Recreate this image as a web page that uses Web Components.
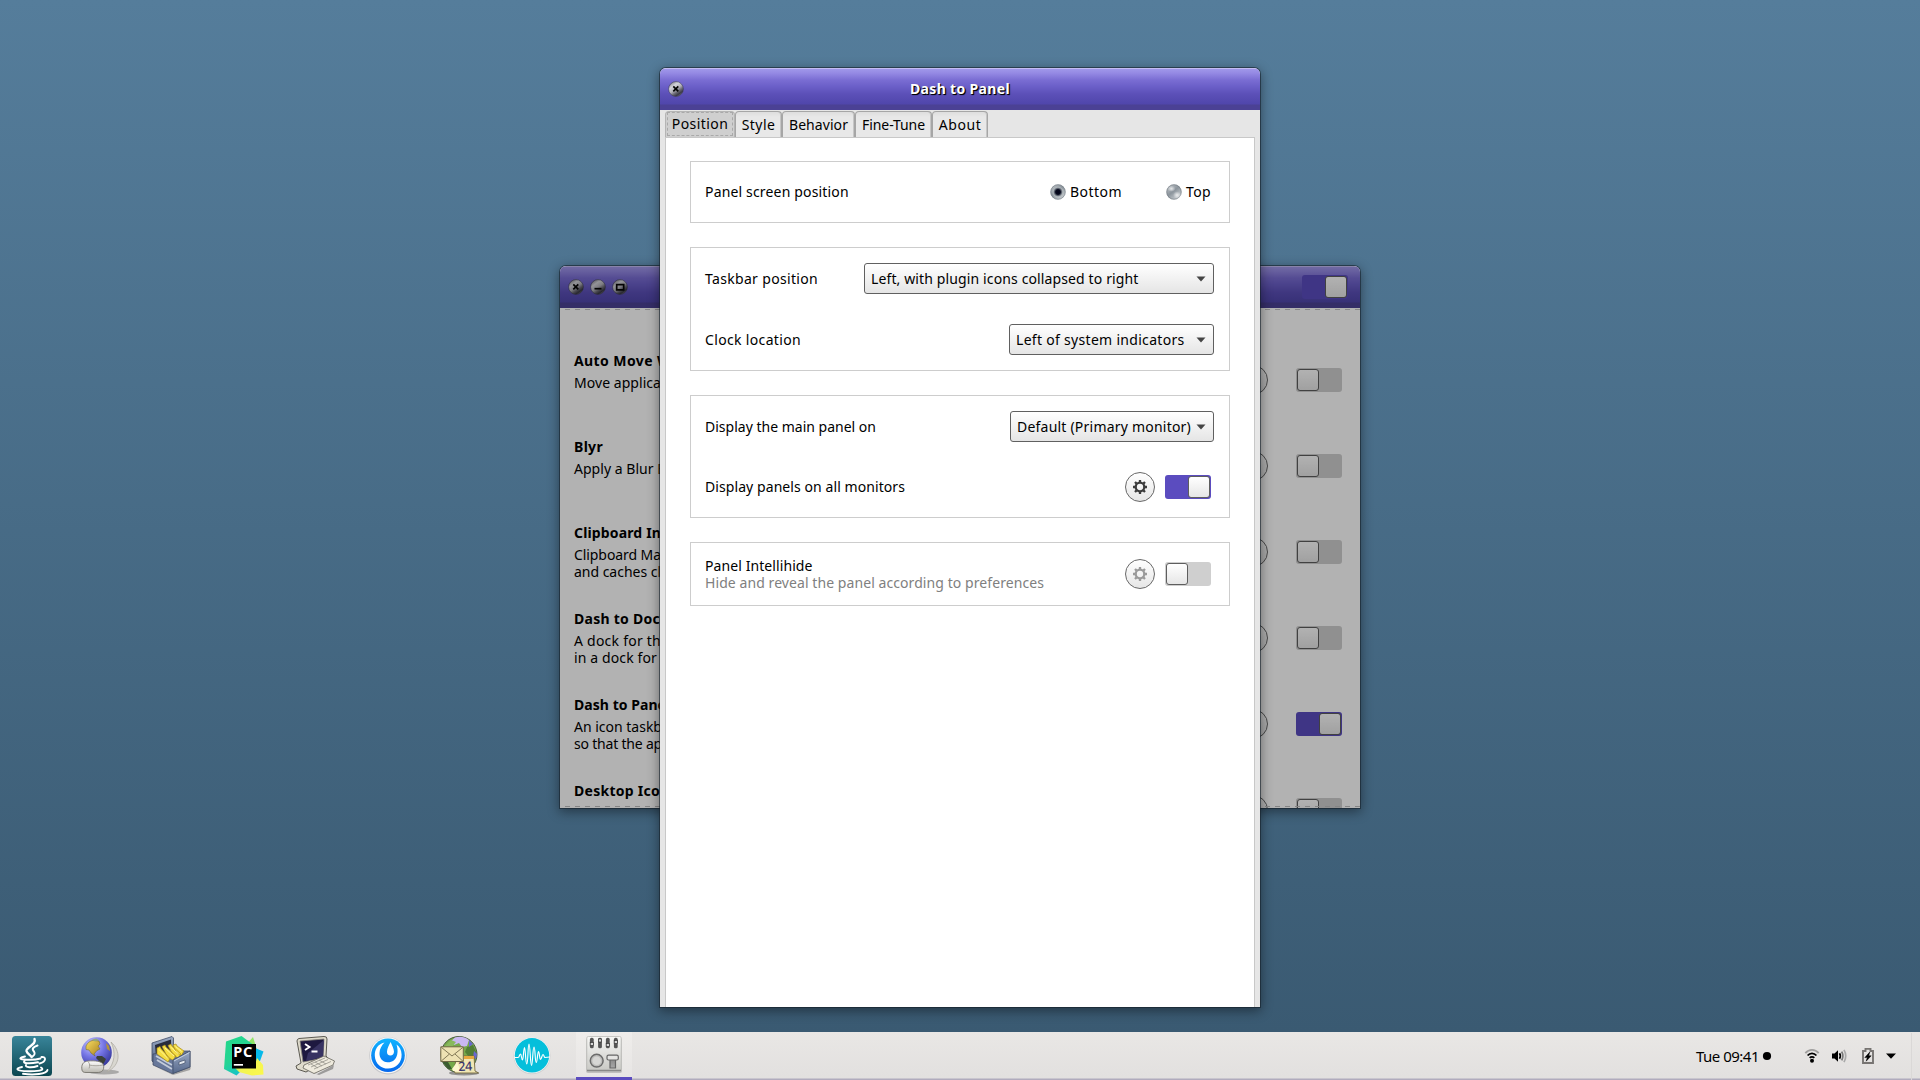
<!DOCTYPE html>
<html lang="en">
<head>
<meta charset="utf-8">
<title>Dash to Panel</title>
<style>
html,body{margin:0;height:100%;overflow:hidden}
body{font:14px/18px "Noto Sans","Open Sans",sans-serif;color:#000}
</style>
</head>
<body>
<desk-top></desk-top>
<script>
const define=(name,html,setup)=>{
  const t=document.createElement('template');t.innerHTML=html;
  customElements.define(name,class extends HTMLElement{
    connectedCallback(){
      if(this.shadowRoot)return;
      this.attachShadow({mode:'open'}).append(t.content.cloneNode(true));
      if(setup)setup(this,this.shadowRoot);
    }
  });
};

/* Label whose tracking is adjusted so that it takes the width "w" */
define('ui-text',`<style>:host{display:block;white-space:nowrap;flex:none}span{display:inline-block}</style><span><slot></slot></span>`,(el,r)=>{
  const w=+el.getAttribute('w');if(!w)return;
  const s=r.querySelector('span');
  const n=el.textContent.length;
  el.style.width=w+'px';
  s.style.letterSpacing=((w-s.getBoundingClientRect().width)/n).toFixed(3)+'px';
});

define('ui-switch',`<style>
:host{display:block;flex:none;width:46px;height:24px;border-radius:3px;background:#cfcfcf;box-sizing:border-box;padding:1px}
i{display:block;box-sizing:border-box;width:22px;height:22px;border:1px solid #5e5e5e;border-radius:3px;background:linear-gradient(#fff,#e6e6e6)}
:host([on]){background:#5b4cbf}
:host([on]) i{margin-left:22px}
</style><i></i>`);

define('gear-button',`<style>
:host{display:flex;flex:none;box-sizing:border-box;width:30px;height:30px;border:1px solid #686868;border-radius:50%;background:linear-gradient(#fff,#e6e6e6);align-items:center;justify-content:center;color:#3c3c3c}
:host([off]){color:#9a9a9a}
svg{display:block}
</style><svg width="16" height="16" viewBox="-8 -8 16 16"><g fill="none" stroke="currentColor"><circle r="4.3" stroke-width="2.3"/><g stroke-width="2.3"><path d="M0-4.700V-7M0 4.700V7M4.700 0H7M-4.700 0H-7M3.400-3.400 5-5M-3.400-3.400-5-5M3.400 3.400 5 5M-3.400 3.400-5 5"/></g></g></svg>`);

define('drop-down',`<style>
:host{display:flex;flex:none;box-sizing:border-box;height:31px;border:1px solid #606060;border-radius:3px;background:linear-gradient(#fff,#e5e5e5);align-items:center;justify-content:space-between;padding:0 7px 0 6px}
svg{display:block}
</style><slot></slot><svg width="10" height="6" viewBox="0 0 10 6"><path d="M.5.5h9L5 5.6z" fill="#444"/></svg>`);

define('radio-dot',`<style>:host{display:block;flex:none;margin-right:4px}svg{display:block}
.p{display:none}:host([on]) .p{display:block}:host([on]) .h{display:none}</style>
<svg width="16" height="16" viewBox="0 0 16 16"><defs>
<linearGradient id="a" x1="0" y1="0" x2=".8" y2="1"><stop offset="0" stop-color="#c9cdd1"/><stop offset=".5" stop-color="#8b949c"/><stop offset="1" stop-color="#d5d9dc"/></linearGradient>
<radialGradient id="b"><stop offset="0" stop-color="#000016"/><stop offset=".5" stop-color="#06091c"/><stop offset="1" stop-color="#1c2338" stop-opacity="0"/></radialGradient>
<radialGradient id="c"><stop offset="0" stop-color="#fff" stop-opacity=".75"/><stop offset="1" stop-color="#fff" stop-opacity="0"/></radialGradient></defs>
<circle cx="8" cy="8" r="7.7" fill="url(#a)"/><circle cx="8" cy="8" r="7.2" fill="none" stroke="#777f86" stroke-opacity=".6"/>
<g class="h"><ellipse cx="5.500" cy="4.800" rx="4" ry="3" fill="url(#c)"/><ellipse cx="11" cy="11" rx="4" ry="3.600" fill="url(#c)"/></g>
<g class="p"><circle cx="8" cy="8" r="5.600" fill="#b4babe" opacity=".7"/><circle cx="8" cy="8" r="4.800" fill="url(#b)"/></g></svg>`);

define('win-button',`<style>:host{display:block;flex:none}svg{display:block}path{display:none;fill:none;stroke:#050505;stroke-width:1.7}
:host([kind=close]) .x,:host([kind=min]) .m,:host([kind=max]) .b{display:block}</style>
<svg width="16" height="16" viewBox="0 0 16 16"><defs>
<linearGradient id="g" x1=".15" y1="0" x2=".85" y2="1"><stop offset="0" stop-color="#77767f"/><stop offset=".28" stop-color="#d4d4da"/><stop offset=".5" stop-color="#b4b3bb"/><stop offset=".68" stop-color="#66656f"/><stop offset=".82" stop-color="#3a3944"/><stop offset="1" stop-color="#a3a2ac"/></linearGradient></defs>
<circle cx="8" cy="8" r="7.400" fill="url(#g)" stroke="#3c3a55" stroke-opacity=".7" stroke-width=".8"/>
<path class="x" d="M5.300 5.300l5 5M10.300 5.300l-5 5"/><path class="m" d="M4.500 9.700h7"/><path class="b" d="M4.700 5.600h7v5.200h-7z"/></svg>`);

define('app-window',`<style>
:host{display:flex;flex-direction:column;position:absolute;border-radius:6px 6px 0 0;box-shadow:0 0 0 1px rgba(22,34,44,.6),0 3px 12px 1px rgba(0,0,0,.42);background:#e6e6e6}
header{flex:none;display:grid;grid-template-columns:1fr auto 1fr;align-items:center;height:42px;box-sizing:border-box;padding:0 12px;border-radius:6px 6px 0 0;
background:linear-gradient(#c3bcf2 0 1px,#a097ea 1px,#958ae4 5px,#7a6dd3 12px,#6c60c9 18px,#5c50b8 26px,#5046ab 36px,#4b4194 37px,#4b4194);color:#fff;font-weight:700;text-shadow:1px 1px 1px #000,1px 1px 0 rgba(0,0,0,.7)}
.l{display:flex;gap:6px;margin-left:-4px;grid-column:1}.r{display:flex;justify-content:flex-end;grid-column:3;grid-row:1}
main{flex:1;min-height:0;display:flex;flex-direction:column;overflow:hidden}
:host([dim])::after{content:"";position:absolute;inset:0;border-radius:6px 6px 0 0;background:rgba(0,0,0,.3)}
</style><header><div class="l"><slot name="buttons"></slot></div><slot name="title"></slot><div class="r"><slot name="end"></slot></div></header><main><slot></slot></main>`);

define('ui-tab',`<style>
:host{display:flex;flex:none;box-sizing:border-box;height:26px;border:1px solid #a6a6a6;border-bottom:0;border-radius:4px 4px 0 0;justify-content:center;align-items:center;padding-top:1px;background:linear-gradient(#dedede,#e8e8e8 5px);box-shadow:inset -1px 0 #c6c6c6}
:host([sel]){background:#cfcfcf;padding:0;border-color:#b5b5b5;box-shadow:none}
div{display:flex;align-items:center;justify-content:center}
:host([sel]) div{flex:1;height:24px;margin:0 1px;border:1px dashed #a9a9a9;box-sizing:border-box;align-self:flex-start}
</style><div><slot></slot></div>`);

define('pref-card',`<style>:host{display:block;border:1px solid #cdcdcd;flex:none}</style><slot></slot>`);
define('pref-row',`<style>:host{display:flex;box-sizing:border-box;align-items:center;height:61px;padding:0 15px 0 14px}
.s{flex:1}.e{display:flex;align-items:center}</style><slot></slot><div class="s"></div><div class="e"><slot name="end"></slot></div>`);

define('ext-row',`<style>
:host{display:flex;flex:none;height:86px;box-sizing:border-box;padding:0 18px 0 14px}
.t{flex:1;padding-top:15px;min-width:0}
.n{font-weight:700}
.d{margin-top:4.4px;line-height:17px}
.e{display:flex;align-items:center;gap:28px}
</style><div class="t"><div class="n"><slot name="name"></slot></div><div class="d"><slot></slot></div></div><div class="e"><gear-button></gear-button><slot name="sw"></slot></div>`);

define('prefs-dialog',`<style>
:host{display:contents}
app-window{left:660px;top:68px;width:600px;height:939px}
nav{display:flex;height:26px;padding:1px 5px 0}
.page{flex:1;margin:0 5px;border:1px solid #c8c8c8;border-bottom:0;background:#fff;padding:23px 24px 0;display:flex;flex-direction:column;gap:24px}
.short{height:60px}.low{height:62px}
.radios{display:flex;align-items:center;margin-right:3px}
.sub{color:#808080}
.two{line-height:17px}
.sw{display:flex;align-items:center;gap:10px;margin-right:3px}
</style>
<app-window>
<win-button slot="buttons" kind="close"></win-button><ui-text slot="title" w="100">Dash to Panel</ui-text>
<nav><ui-tab sel style="width:70px"><ui-text w="56.5">Position</ui-text></ui-tab><ui-tab style="width:47px"><ui-text w="33.5">Style</ui-text></ui-tab><ui-tab style="width:73px"><ui-text w="59">Behavior</ui-text></ui-tab><ui-tab style="width:77px"><ui-text w="63">Fine-Tune</ui-text></ui-tab><ui-tab style="width:56px"><ui-text w="42.5">About</ui-text></ui-tab></nav>
<div class="page">
<pref-card><pref-row class="short"><ui-text w="143.8">Panel screen position</ui-text><div slot="end" class="radios"><radio-dot on></radio-dot><ui-text w="52">Bottom</ui-text><radio-dot style="margin-left:44px"></radio-dot><ui-text w="25">Top</ui-text></div></pref-row></pref-card>
<pref-card><pref-row><ui-text w="113">Taskbar position</ui-text><drop-down slot="end" style="width:350px"><ui-text w="267.500">Left, with plugin icons collapsed to right</ui-text></drop-down></pref-row>
<pref-row><ui-text w="96">Clock location</ui-text><drop-down slot="end" style="width:205px"><ui-text w="168.500">Left of system indicators</ui-text></drop-down></pref-row></pref-card>
<pref-card><pref-row><ui-text w="171">Display the main panel on</ui-text><drop-down slot="end" style="width:204px"><ui-text w="174">Default (Primary monitor)</ui-text></drop-down></pref-row>
<pref-row class="short"><ui-text w="200">Display panels on all monitors</ui-text><div slot="end" class="sw"><gear-button></gear-button><ui-switch on></ui-switch></div></pref-row></pref-card>
<pref-card><pref-row class="low"><div class="two"><ui-text w="107.500">Panel Intellihide</ui-text><ui-text class="sub" w="339">Hide and reveal the panel according to preferences</ui-text></div><div slot="end" class="sw"><gear-button off></gear-button><ui-switch></ui-switch></div></pref-row></pref-card>
</div>
</app-window>`);

define('extensions-window',`<style>
:host{display:contents}
app-window{left:560px;top:266px;width:800px;height:542px}
.list{flex:1;min-height:0;background:#fff;overflow:hidden;display:flex;flex-direction:column}
.dash{flex:none;height:1px;margin-left:5px;background:repeating-linear-gradient(90deg,#c4c4c4 0 5px,transparent 5px 10px)}
.rows{flex:1;min-height:0;overflow:hidden;display:flex;flex-direction:column;padding-top:27px;margin-bottom:-2px}
.top{margin-top:1px}.bot{margin-bottom:1px;background:repeating-linear-gradient(90deg,#bdbdbd 0 5px,transparent 5px 10px)}
</style>
<app-window dim>
<win-button slot="buttons" kind="close"></win-button><win-button slot="buttons" kind="min"></win-button><win-button slot="buttons" kind="max"></win-button>
<ui-switch slot="end" on></ui-switch>
<div class="list"><div class="dash top"></div><div class="rows">
<ext-row><ui-text slot="name" w="97">Auto Move W</ui-text><ui-text w="87">Move applica</ui-text><ui-switch slot="sw"></ui-switch></ext-row>
<ext-row><ui-text slot="name" w="29">Blyr</ui-text><ui-text w="91">Apply a Blur E</ui-text><ui-switch slot="sw"></ui-switch></ext-row>
<ext-row><ui-text slot="name" w="87">Clipboard In</ui-text><ui-text w="87">Clipboard Ma</ui-text><ui-text w="87">and caches cl</ui-text><ui-switch slot="sw"></ui-switch></ext-row>
<ext-row><ui-text slot="name" w="86">Dash to Doc</ui-text><ui-text w="87">A dock for th</ui-text><ui-text w="83">in a dock for</ui-text><ui-switch slot="sw"></ui-switch></ext-row>
<ext-row><ui-text slot="name" w="92">Dash to Pane</ui-text><ui-text w="88">An icon taskb</ui-text><ui-text w="88">so that the ap</ui-text><ui-switch slot="sw" on></ui-switch></ext-row>
<ext-row><ui-text slot="name" w="86">Desktop Ico</ui-text><ui-switch slot="sw"></ui-switch></ext-row>
</div><div class="dash bot"></div></div>
</app-window>`);

define('task-item',`<style>:host{display:flex;flex:none;box-sizing:border-box;width:56px;height:100%;justify-content:center;padding-top:4px}
:host([active]){background:linear-gradient(#efedeb,#e7e5e4);border-bottom:3px solid #5b4cbf}</style><slot></slot>`);

define('task-bar',`<style>
:host{display:flex;flex:none;height:48px;box-sizing:border-box;background:linear-gradient(#e9e7e5,#e2e0df 46px,#b0abbd 47px)}
.apps{display:flex;gap:16px;padding-left:4px;flex:1}
.first{margin-right:-4px}
svg{display:block;overflow:visible}
.tray{display:flex;align-items:center;height:48px}
.clock{font-size:15px;line-height:20px}
.edge{width:8px;height:47px;border-left:1px solid #dad8d7;margin-left:15px}
</style>
<div class="apps">
<task-item class="first"><svg width="40" height="40"><defs><linearGradient id="j" x1="0" y1="0" x2="0" y2="1"><stop offset="0" stop-color="#39859a"/><stop offset="1" stop-color="#0b4650"/></linearGradient></defs><rect width="40" height="40" rx="3.5" fill="url(#j)"/>
<g fill="none" stroke="#fff" stroke-width="1.9" stroke-linecap="round"><path d="M22.5 3C25 9 14 10.500 14.500 15C15 17.500 18 18.500 19.500 21" stroke-width="2.400"/><path d="M25.500 9.500C21 11 19.500 13 22 15.500C23.500 18 22.500 19 20.500 20.500" stroke-width="2"/>
<path d="M13 20.500C7.500 21.500 6.500 23.300 12 23.500C19 24 25 23.500 28.500 22.500M29.500 21C34.500 20.500 34.500 25.500 27.500 27.500M12.500 25C10 27.300 17 28.200 26 26.200M14 29C12.500 31.500 20 32 25.500 30"/>
<path d="M10 31C2.500 32.500 4 35 16 35.200C30 35.500 32.500 33.500 29 31.500M11 37.800C22 39.500 34.500 38 35.500 34"/></g></svg></task-item>

<task-item><svg width="40" height="40"><defs><radialGradient id="e" cx=".35" cy=".25" r=".8"><stop offset="0" stop-color="#c9c9ff"/><stop offset=".5" stop-color="#7474e4"/><stop offset="1" stop-color="#34369a"/></radialGradient><linearGradient id="gd" x1="0" y1="0" x2="1" y2="1"><stop offset="0" stop-color="#f7dc61"/><stop offset="1" stop-color="#a8801f"/></linearGradient><linearGradient id="ms" x1="0" y1="0" x2="0" y2="1"><stop offset="0" stop-color="#fff"/><stop offset="1" stop-color="#b8b6ae"/></linearGradient></defs>
<ellipse cx="24" cy="36" rx="15" ry="2.500" fill="#555" opacity=".4"/><path d="M31 6C41 15 41 29 27 36C35 27 36 16 31 6z" fill="#d9d7d0" stroke="#aaa89f" stroke-width=".7"/>
<circle cx="16.500" cy="16.500" r="15.300" fill="url(#e)"/>
<path d="M6 10C8 6 11 4 15 4.500L19 5 20 8 18 10 20 13 17 14.500 14 18 15 20 11 17 9 14 6 13.500z" fill="url(#gd)" stroke="#77702a" stroke-width=".6"/><path d="M12 3.500l4-1 3 1.500-4 1.500z" fill="#94a978"/><path d="M17 20l5 0 4 3-2 4-4 4-1-6-3-3z" fill="#3b4139"/><path d="M26 7l3 3 1 5-3-2z" fill="#b29438"/>
<path d="M2 34C1 29 3 25.500 8 25C15 24.500 22 25 23.500 29C24.500 34 22 36.700 17 36.500H6C3 36.500 2.300 35.500 2 34z" fill="url(#ms)" stroke="#77756e" stroke-width=".9"/><path d="M8 25.500c2 2 2 5 1 7M9 29c5 1 9 1 14 0" fill="none" stroke="#9a978f" stroke-width=".8"/></svg></task-item>

<task-item><svg width="40" height="40"><defs><linearGradient id="cb" x1="0" y1="0" x2="0" y2="1"><stop offset="0" stop-color="#9aa9c3"/><stop offset="1" stop-color="#56688b"/></linearGradient></defs>
<path d="M4 31L19 37.500 39 31 38 34 21 39z" fill="#444" opacity=".4"/>
<path d="M0 7L20 .5 21.500 2V18L2 27 0 25z" fill="url(#cb)" stroke="#3f4b66" stroke-width=".8"/><path d="M3 9L19 3.500V14L4 20z" fill="#272b3a"/>
<path d="M1 18L22 15 38 15V31L20 37.500 1 29z" fill="#67779a" stroke="#3b465f" stroke-width=".7"/><path d="M4 20L20 29M5 24L20 33" stroke="#c3cbd9" stroke-width="2"/>
<path d="M5 12l3-1.500 1 2 9 10-2 3.500L5 18zM10 10.500l3-1.500 1 2 10 9-3 4-5-2zM16 9.500l3-1.500 1 2 9 8-3 4-5-3zM21 9l3-1 1 2 7 5-3 5-5-4z" fill="#f5dd42" stroke="#a98b1c" stroke-width=".7"/><path d="M7 13.500l9 9M13 12l9 8M18.500 11l8 7M23.500 10.500l6 5" stroke="#fff69a" stroke-width="1"/>
<path d="M21 24L38 15V31L21 37.500z" fill="url(#cb)" stroke="#46536e" stroke-width=".9"/><path d="M22 25L37.500 16.500" stroke="#c5d0e2"/><path d="M27 26l6-2v3l-6 2z" fill="#e4e8ee" stroke="#44506a" stroke-width=".7"/></svg></task-item>

<task-item><svg width="40" height="40"><defs><linearGradient id="pc" x1="0" y1="0" x2=".6" y2="1"><stop offset="0" stop-color="#21d789"/><stop offset=".55" stop-color="#25d493"/><stop offset="1" stop-color="#12bfd5"/></linearGradient><linearGradient id="py" x1="1" y1="1" x2="0" y2=".3"><stop offset="0" stop-color="#fcf84a"/><stop offset=".7" stop-color="#f1f451"/><stop offset="1" stop-color="#5fdf77"/></linearGradient></defs>
<path d="M22 9L29 1 33 14 23 18z" fill="#91e566"/><path d="M31 12L39.500 15.500 36 25 31 27z" fill="#07b9e9"/><path d="M2 5.500L17.500 0 31 10 24 28 12.500 39.500 0 33z" fill="url(#pc)"/><path d="M33 22L39 29 39.500 38.500 28 39.500 15 36 11 32 31 29z" fill="url(#py)"/>
<rect x="8" y="8" width="24" height="24.500"/><rect x="9.800" y="28" width="9.200" height="1.700" fill="#fff"/><text x="9.300" y="21.300" font-family="Noto Sans,sans-serif" font-weight="700" font-size="14.500" fill="#fff" textLength="19">PC</text></svg></task-item>

<task-item><svg width="40" height="40"><path d="M6 33l15 5 17-9-1 4-14 6z" fill="#333" opacity=".4"/><path d="M1 5Q1 3 3 2.500L28 .5Q31 .3 31 3L30 20 33 23 10 36 1 33 0 30 5 27z" fill="#dedacb" stroke="#4d4b43" stroke-width=".9"/>
<path d="M4 5L28 3 27 22 7 26z" fill="#1e1940" stroke="#88857b" stroke-width=".8"/><path d="M12 17L28 4 27 21 10 25z" fill="#383362"/><path d="M9 8l4.500 3L9 14M15.500 15.500h6" fill="none" stroke="#fff" stroke-width="1.900"/>
<path d="M8 29L28 20 38.500 25 37 29 18 37.500 7 32z" fill="#eeeadd" stroke="#66635a" stroke-width=".8"/><path d="M12 29l17-7M15 31l17-7.500M18 33l17-7.500M15 28l7 4M19 26l7 4M23 24l7 4" fill="none" stroke="#96938a" stroke-width=".8"/></svg></task-item>

<task-item><svg width="40" height="40"><defs><linearGradient id="mm" x1="0" y1="0" x2="0" y2="1"><stop offset="0" stop-color="#10b4ff"/><stop offset="1" stop-color="#0567ed"/></linearGradient></defs><circle cx="20" cy="19.700" r="18.700" fill="#c6c7ca"/><circle cx="20" cy="19.300" r="18" fill="#f5f5f5"/><circle cx="20" cy="19.300" r="16.800" fill="url(#mm)"/>
<path d="M16.500 6.500C9.500 8 6.500 14 6.800 20C7.200 28 13.300 32.600 20 32.600C28 32.600 34 26.500 33.600 18.500C33.400 14 31.500 10.500 28.500 8.500C29.500 12 30 15 29.200 18.500C28 24 24 26.500 19.500 26.300C14.500 26 11.200 22 11.500 17C11.700 13 13.500 9.500 16.500 6.500z" fill="#fff"/><path d="M22.600 6C24 9 26 13 26 15.500C26 18 24.400 19.600 22.500 19.600C20.300 19.600 18.700 18 19 15.500C19.200 12.500 21.300 8.500 22.600 6z" fill="#fff"/></svg></task-item>

<task-item><svg width="40" height="40"><ellipse cx="24" cy="37" rx="15" ry="2.500" fill="#444" opacity=".5"/><circle cx="19" cy="18.500" r="18" fill="#76a94b" stroke="#41503a" stroke-width=".9"/><path d="M15 1.500C20 0 25 1 29 4L27 10 22 11 19 7 14 9 10 6z" fill="#c9b8f2"/><path d="M27 11l6-2 3 7-1 8-6-3-4-5z" fill="#527e35"/><path d="M29 4l4 4-4 3zM34 15l3 3-1 5-3-2z" fill="#6a68d0"/><path d="M2 25l6 1 4 7-4 0z" fill="#3a5b30"/><path d="M5 10l6-6 5 2-4 5z" fill="#88b95d"/>
<path d="M17 20H34L35 35 38.500 37 15 37C13 34 16 26 17 20z" fill="#f1e6b4" stroke="#756a3f" stroke-width=".9"/><path d="M24 20h10v3H23.500z" fill="#e6a93f"/><path d="M12 33l5-7 4 10-8-1z" fill="#fff7d0"/><text x="18.300" y="34.800" font-family="Noto Sans,sans-serif" font-weight="500" font-size="12.500" fill="#37356d" textLength="14" transform="rotate(-3 24 32)">24</text>
<path d="M.8 10.800H23.300V25.500H.8z" fill="#ede2b3" stroke="#716845" stroke-width="1"/><path d="M1 25.300L9.500 18M23 25.300L15 18M1.300 11.300L12 20 23 11.300" fill="none" stroke="#827956" stroke-width="1"/></svg></task-item>

<task-item><svg width="40" height="40"><circle cx="20" cy="19.800" r="18.500" fill="#d1d1d1"/><circle cx="20" cy="19.300" r="18" fill="#f3f4f4"/><circle cx="20" cy="19.300" r="17.200" fill="#05bfdb"/><path d="M2.500 21.500H6C7.500 21.500 7.500 18 8.500 18S9.500 24 10.500 24 11.500 11.500 12.500 11.500 13.500 28 14.800 28 15.800 8 17 8 18.300 29.500 19.500 29.500 20.700 11 22 11 23 26.500 24.200 26.500 25.500 15.500 26.500 15.500 27.500 23.500 28.500 23.500 30 18.500 31 18.500 32 21.500 33 21.500L37.500 21" fill="none" stroke="#fff" stroke-width="1.150"/></svg></task-item>

<task-item active><svg width="40" height="40"><defs><linearGradient id="tw" x1="0" y1="0" x2="0" y2="1"><stop offset="0" stop-color="#f7f7f5"/><stop offset="1" stop-color="#c9c9c5"/></linearGradient><linearGradient id="tk" x1="0" y1="0" x2="0" y2="1"><stop offset="0" stop-color="#8a8a8a"/><stop offset="1" stop-color="#a8a8a8"/></linearGradient></defs>
<rect x="2" y="2" width="36" height="35" rx="2" fill="#777" opacity=".35"/><rect x="2.800" y=".500" width="34.400" height="34" rx="1.500" fill="url(#tw)" stroke="#bdbdb9" stroke-width=".8"/><path d="M3 34.500h34" stroke="#888" stroke-width="1.300"/>
<g fill="#555"><rect x="5.900" y="1.800" width="3.800" height="10.500" rx="1.600"/><rect x="14.100" y="1.800" width="3.800" height="10.500" rx="1.600"/><rect x="21.900" y="1.800" width="3.800" height="10.500" rx="1.600"/><rect x="29.900" y="1.800" width="3.800" height="10.500" rx="1.600"/></g><g fill="#d8d8d8" stroke="#333" stroke-width=".7"><rect x="6.200" y="6.500" width="3.200" height="3"/><rect x="14.400" y="3" width="3.200" height="3"/><rect x="22.200" y="7.500" width="3.200" height="3"/><rect x="30.200" y="4.500" width="3.200" height="3"/></g>
<circle cx="12.700" cy="24.700" r="6.400" fill="#bdbdbb" stroke="#6b6b6b" stroke-width="1.500"/><circle cx="12.700" cy="24.700" r="4.300" fill="#d6d6d4"/><path d="M26 23V32H31.500V23z" fill="url(#tk)" stroke="#666" stroke-width="1.200"/><rect x="23" y="19.200" width="11.300" height="4.800" rx="1.500" fill="#e4e4e2" stroke="#666" stroke-width="1.200"/></svg></task-item>
</div>
<div class="tray">
<ui-text class="clock" w="63">Tue 09:41</ui-text>
<svg style="margin-left:3px" width="10" height="10"><circle cx="5" cy="5" r="4.100"/></svg>
<svg style="margin-left:33px" width="14" height="14" viewBox="0 0 14 14"><g fill="none" stroke="#000" stroke-width="1.800"><path d="M.3 4.200C4-.2 10-.2 13.700 4.200" stroke="#a09f9e"/><path d="M2.600 6.500C5 3.600 9 3.600 11.400 6.500M4.700 8.900C6 7.500 8 7.500 9.300 8.900"/></g><circle cx="7" cy="11.700" r="2"/></svg>
<svg style="margin-left:13px" width="15" height="14" viewBox="0 0 15 14"><path d="M0 4.500H2.500L6 1.200V12.800L2.500 9.500H0z"/><g fill="none" stroke-width="1.700"><path d="M7.500 4.300Q9.200 7 7.500 9.700" stroke="#000"/><path d="M9.700 2.600Q12 7 9.700 11.400" stroke="#777"/><path d="M12 .9Q15.500 7 12 13.100" stroke="#aaa"/></g></svg>
<svg style="margin-left:15px" width="12" height="16" viewBox="0 0 12 16"><path d="M1 3H3.500V.9H8.500V3H11V15H1z" fill="none" stroke="#777472" stroke-width="1.900"/><path d="M7.800 4L2.800 9.600H5.300L4.200 13.200 9.200 7.800H6.700z" stroke="#000" stroke-width=".5"/></svg>
<svg style="margin-left:12px" width="10" height="6"><path d="M0 .5h10L5 5.800z"/></svg>
<div class="edge"></div></div>`);

define('desk-top',`<style>
:host{display:flex;flex-direction:column;width:1920px;height:1080px;overflow:hidden;background:#3a5a72}
.work{flex:1;position:relative;background:linear-gradient(#557d9b,#3a5a72)}
</style><div class="work"><extensions-window></extensions-window><prefs-dialog></prefs-dialog></div><task-bar></task-bar>`);
</script>
</body>
</html>
